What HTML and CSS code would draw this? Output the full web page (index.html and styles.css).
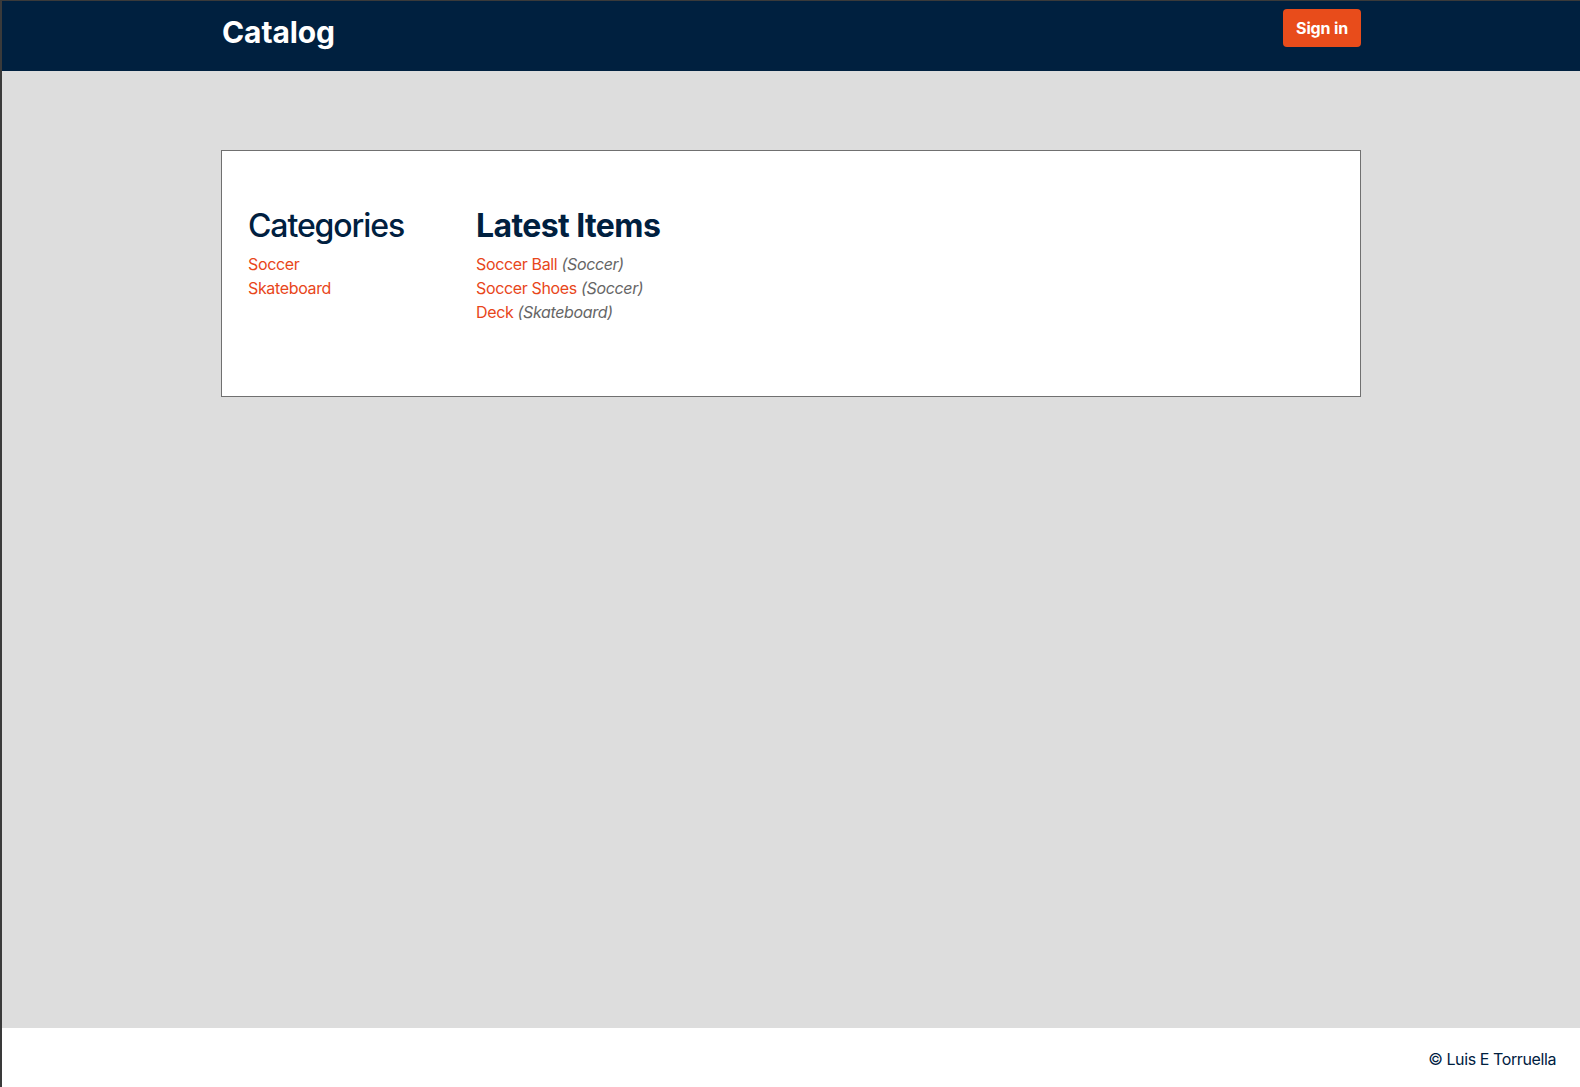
FILE: index.html
```html
<!DOCTYPE html>
<html lang="en">
<head>
<meta charset="utf-8">
<title>Catalog</title>
<link rel="stylesheet" href="styles.css">
</head>
<body>
<div class="frame">
  <div class="page">
    <header class="topbar">
      <div class="container topbar-inner">
        <a class="brand" href="#">Catalog</a>
        <a class="btn-signin" href="#">Sign in</a>
      </div>
    </header>
    <main class="main">
      <div class="container">
        <section class="card">
          <div class="col col-cats">
            <h2 class="heading heading-cats">Categories</h2>
            <ul class="list">
              <li><a href="#">Soccer</a></li>
              <li><a href="#">Skateboard</a></li>
            </ul>
          </div>
          <div class="col col-items">
            <h2 class="heading heading-items">Latest Items</h2>
            <ul class="list">
              <li><a href="#">Soccer Ball</a> <em class="cat">(Soccer)</em></li>
              <li><a href="#">Soccer Shoes</a> <em class="cat">(Soccer)</em></li>
              <li><a href="#">Deck</a> <em class="cat">(Skateboard)</em></li>
            </ul>
          </div>
        </section>
      </div>
    </main>
    <footer class="footer">© Luis E Torruella</footer>
  </div>
</div>
</body>
</html>
```

FILE: styles.css
```css
* { box-sizing: border-box; }
html, body { margin: 0; padding: 0; height: 100%; }
body {
  font-family: Inter, "Noto Sans", sans-serif;
  background: #9a9a9a;
}
.frame {
  height: 100%;
  padding: 1px 0 0 2px;
  background: #3a3a3a;
}
.page {
  height: 100%;
  display: flex;
  flex-direction: column;
  background: #dddddd;
}
.container {
  width: 1140px;
  margin: 0 auto;
}
.topbar {
  background: #00203f;
  height: 70px;
}
.topbar-inner {
  display: flex;
  justify-content: space-between;
  align-items: flex-start;
}
.brand {
  margin-top: 13px;
  margin-left: 1px;
  font-size: 30px;
  font-weight: 700;
  letter-spacing: -0.1px;
  color: #ffffff;
  text-decoration: none;
  line-height: 36px;
}
.btn-signin {
  margin-top: 8px;
  display: block;
  white-space: nowrap;
  background: #e84c1b;
  color: #ffffff;
  font-weight: 700;
  font-size: 16px;
  letter-spacing: -0.15px;
  line-height: 20px;
  padding: 9px 13px;
  border-radius: 4px;
  text-decoration: none;
}
.main {
  flex: 1;
  padding-top: 79px;
}
.card {
  background: #ffffff;
  border: 1px solid #707070;
  height: 247px;
  display: flex;
  padding: 55px 25px 0 26px;
}
.col-cats { width: 228px; }
.heading {
  margin: 0 0 7px 0;
  font-size: 32px;
  line-height: 39px;
  color: #00203f;
}
.heading-cats { font-weight: 500; letter-spacing: -1.1px; }
.heading-items { font-weight: 700; letter-spacing: -0.6px; }
.list {
  list-style: none;
  margin: 0;
  padding: 0;
  font-size: 16px;
  line-height: 24px;
  letter-spacing: -0.35px;
}
.list a {
  color: #e8461a;
  text-decoration: none;
}
.cat {
  color: #666666;
}
.footer {
  height: 59px;
  background: #ffffff;
  color: #00203f;
  font-size: 16px;
  letter-spacing: -0.4px;
  text-align: right;
  padding: 19px 24px 0 0;
  line-height: 24px;
}
```
